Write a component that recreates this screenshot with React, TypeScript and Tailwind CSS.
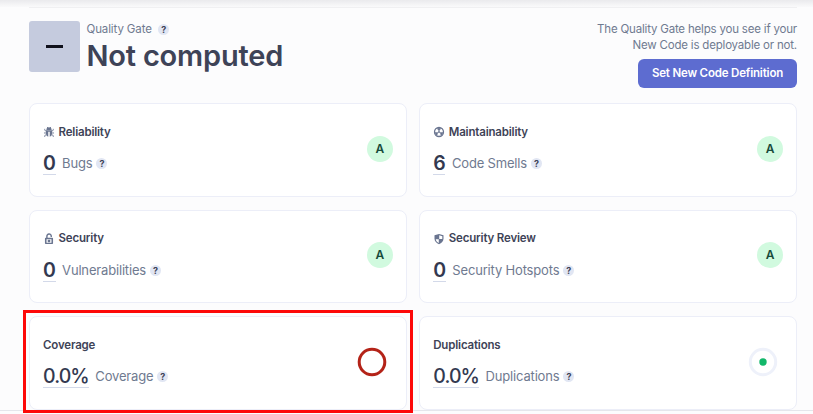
import type { ReactNode } from "react";

function Help({ className = "" }: { className?: string }) {
  return (
    <span className={`flex size-[11px] shrink-0 items-center justify-center rounded-full bg-[#e1e6f3] text-[9px] leading-none font-bold tracking-normal text-[#3e4357] ${className}`}>
      ?
    </span>
  );
}

function BugIcon() {
  return (
    <svg viewBox="0 0 16 16" className="size-[12px]" fill="none" stroke="#6a7590" strokeWidth="1.2">
      <path d="M4.500 5.200a3.500 3.500 0 0 1 7 0z" fill="#6a7590" stroke="none" />
      <path d="M5.500 1.300 6.600 2.800M10.500 1.300 9.400 2.800M4.500 6.700H3.300L2.300 5V3.800M11.500 6.700h1.200L13.700 5V3.800M4 9.300H1.300M12 9.300h2.700M4.500 11.800H3.300l-1 1.500v1.200M11.500 11.800h1.200l1 1.500v1.200" />
      <path d="M4 5.600h8v5a4 4 0 0 1-3 3.700V7.800H7v6.500a4 4 0 0 1-3-3.700z" fill="#6a7590" stroke="none" />
    </svg>
  );
}

function SmellIcon() {
  return (
    <svg viewBox="0 0 16 16" className="size-[12px]">
      <circle cx="8" cy="8" r="6" fill="none" stroke="#6a7590" strokeWidth="1.700" />
      <path d="M8 6.600 5.600 3.400a5 5 0 0 1 4.800 0zM6.600 8.600l-4 .1a5 5 0 0 0 2.600 4zM9.400 8.600l4 .1a5 5 0 0 1-2.600 4z" fill="#6a7590" stroke="#6a7590" strokeWidth=".6" />
      <circle cx="8" cy="8" r="1.300" fill="#6a7590" />
    </svg>
  );
}

function LockIcon() {
  return (
    <svg viewBox="0 0 16 16" className="size-[12px]">
      <path d="M5.200 7V4.300a2.900 2.900 0 0 1 5.800-.3v1.200" fill="none" stroke="#6a7590" strokeWidth="1.900" />
      <path fillRule="evenodd" d="M3.600 6.200h8.800a1 1 0 0 1 1 1v6.600a1 1 0 0 1-1 1H3.600a1 1 0 0 1-1-1V7.200a1 1 0 0 1 1-1zM4.700 8.200v4.700h6.600V8.200z" fill="#6a7590" />
      <rect x="6.300" y="8.900" width="3.400" height="3.400" rx="1" fill="#6a7590" />
    </svg>
  );
}

function ShieldIcon() {
  return (
    <svg viewBox="0 0 16 16" className="size-[12px]">
      <path d="M8 1.200 14 3v4.700c0 3.500-2.600 6-6 7.300-3.400-1.300-6-3.800-6-7.300V3z" fill="#6a7590" />
      <path d="M8.300 3v5H12.400V4.200zM7.700 8.200H3.700c.3 2.300 1.800 4 4 5z" fill="#fff" />
    </svg>
  );
}

function Rating() {
  return (
    <span className="mb-[3px] flex size-[26px] items-center justify-center rounded-full bg-[#d1fadf] text-[12px] font-semibold text-[#174b3a]">
      A
    </span>
  );
}

function Ring() {
  return (
    <svg viewBox="0 0 30 30" className="mr-[6px] mb-[2px] size-[30px]">
      <circle cx="15" cy="15" r="12.800" fill="none" stroke="#b42318" strokeWidth="3" />
    </svg>
  );
}

function Dot() {
  return (
    <svg viewBox="0 0 30 30" className="mr-[5.500px] mb-[2px] size-[30px]">
      <circle cx="15" cy="15" r="12.700" fill="none" stroke="#eef1fa" strokeWidth="3" />
      <circle cx="15" cy="15" r="3.700" fill="#12b76a" />
    </svg>
  );
}

type CardProps = { title: string; icon?: ReactNode; value: string; label: string; indicator: ReactNode };

function Card({ title, icon, value, label, indicator }: CardProps) {
  const valueStyle = value.endsWith("%") ? "font-medium tracking-[-0.9px]" : "font-semibold tracking-[-0.3px]";
  return (
    <section className="flex h-[93.500px] items-center justify-between rounded-[8px] border border-[#eceef8] bg-white pr-[13px] pl-[13px]">
      <div className="h-full pt-[19px]">
        <h2 className="flex h-[18px] items-center gap-[3.500px] text-[11.500px] font-semibold tracking-[-0.18px] text-[#3e4357]">
          {icon}
          {title}
        </h2>
        <div className="mt-[10px] flex h-[25px] items-start">
          <a className={`h-[24px] border-b border-[#d3d9e9] text-[19.500px] leading-[25px] text-[#333950] ${valueStyle}`}>{value}</a>
          <span className="ml-[6.500px] text-[13px] leading-[25px] tracking-[-0.170px] text-[#6f7a90]">{label}</span>
          <Help className="mt-[7px] ml-[4px]" />
        </div>
      </div>
      {indicator}
    </section>
  );
}

export default function App() {
  return (
    <div className="h-[414px] w-[813px] overflow-hidden bg-[#fcfcfd] font-['Inter',sans-serif]">
      <div className="h-[7px] bg-linear-to-b from-[#eaeaed] to-[#fafafb]" />
      <main className="flex h-[404px] flex-col border-b border-[#e5e6eb] pr-[16px] pl-[29px]">
        <hr className="border-[#f0f0f2]" />
        <header className="flex h-[95.300px] shrink-0 justify-between pt-[13px]">
          <div className="flex">
            <div className="flex size-[51px] items-center justify-center rounded-[3px] bg-[#c5cbde]">
              <span className="h-[3px] w-[17px] bg-[#10111c]" />
            </div>
            <div className="ml-[6.500px]">
              <div className="flex h-[17px] items-center text-[11.500px] leading-[17px] tracking-[-0.12px] text-[#6f7a90]">
                Quality Gate
                <Help className="mb-px ml-[6.500px]" />
              </div>
              <h1 className="text-[29px] leading-[36px] font-semibold tracking-[-0.2px] text-[#3e4357]">Not computed</h1>
            </div>
          </div>
          <div className="flex flex-col items-end">
            <p className="text-right text-[11.500px] leading-[16px] tracking-[-0.19px] text-[#6f7a90]">
              The Quality Gate helps you see if your
              <br />
              New Code is deployable or not.
            </p>
            <button className="mt-[6px] h-[29px] w-[159px] rounded-[6px] bg-[#5d6cd0] text-[11.500px] font-semibold tracking-[-0.18px] whitespace-nowrap text-white">
              Set New Code Definition
            </button>
          </div>
        </header>
        <div className="grid shrink-0 grid-cols-2 gap-x-[12.500px] gap-y-[13px]">
          <Card title="Reliability" icon={<BugIcon />} value="0" label="Bugs" indicator={<Rating />} />
          <Card title="Maintainability" icon={<SmellIcon />} value="6" label="Code Smells" indicator={<Rating />} />
          <Card title="Security" icon={<LockIcon />} value="0" label="Vulnerabilities" indicator={<Rating />} />
          <Card title="Security Review" icon={<ShieldIcon />} value="0" label="Security Hotspots" indicator={<Rating />} />
          <div className="relative">
            <Card title="Coverage" value="0.0%" label="Coverage" indicator={<Ring />} />
            <div className="absolute -top-[6px] -left-[6px] h-[103px] w-[390px] border-[3px] border-[#fd0808]" />
          </div>
          <Card title="Duplications" value="0.0%" label="Duplications" indicator={<Dot />} />
        </div>
      </main>
    </div>
  );
}
